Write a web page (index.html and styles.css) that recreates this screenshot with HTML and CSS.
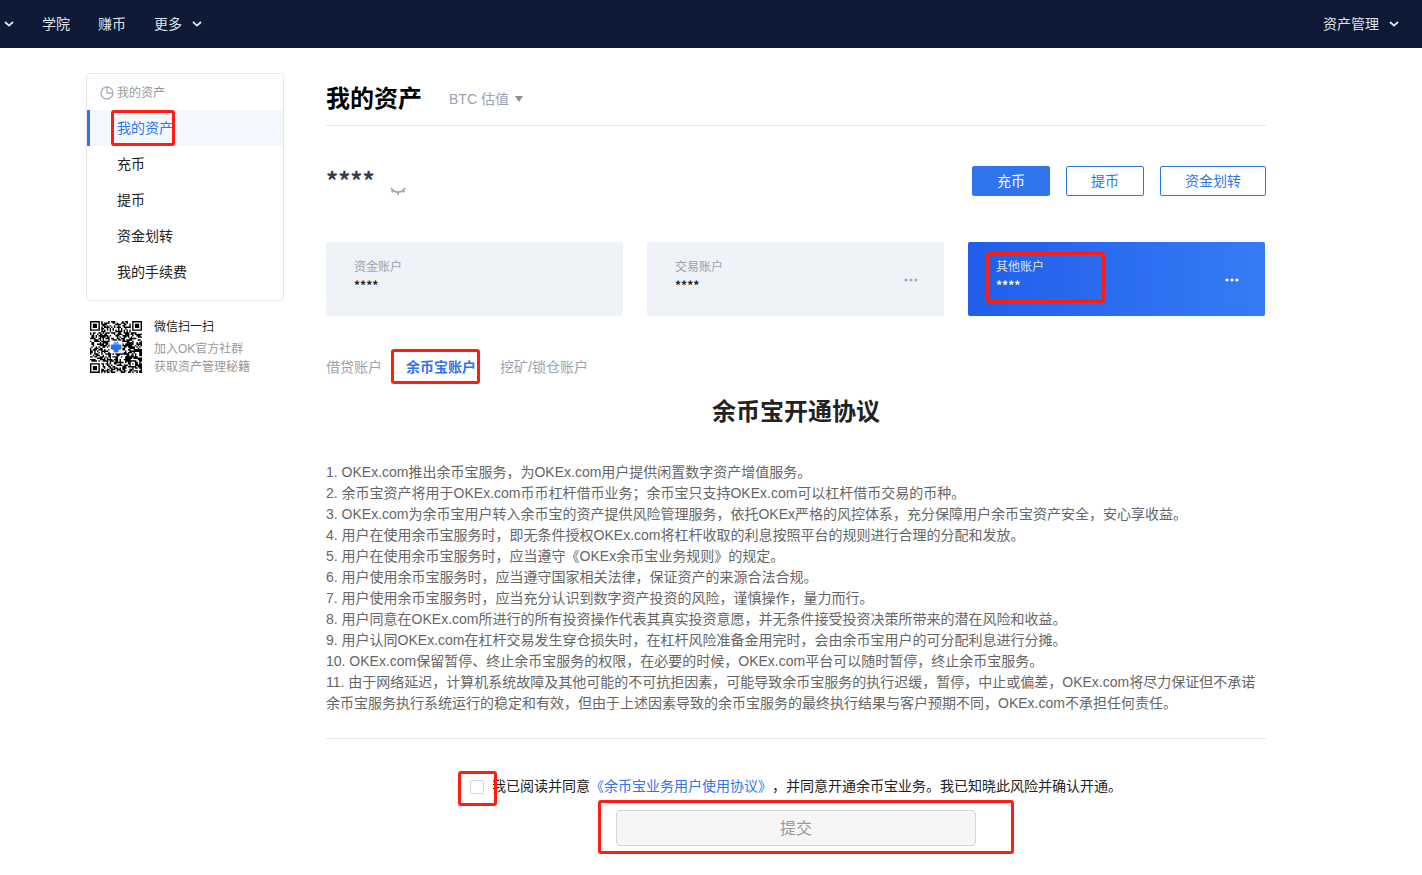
FILE: index.html
```html
<!DOCTYPE html>
<html lang="zh-CN">
<head>
<meta charset="utf-8">
<title>我的资产</title>
<link rel="stylesheet" href="styles.css">
</head>
<body>
<header class="topbar">
  <nav class="topnav">
    <button class="nav-item" type="button" aria-label="展开"><svg class="chevron" viewBox="0 0 10 6"><path d="M1 1l4 3.6L9 1"/></svg></button>
    <a class="nav-item" href="#">学院</a>
    <a class="nav-item" href="#">赚币</a>
    <button class="nav-item" type="button">更多<svg class="chevron" viewBox="0 0 10 6"><path d="M1 1l4 3.6L9 1"/></svg></button>
  </nav>
  <button class="nav-item" type="button">资产管理<svg class="chevron" viewBox="0 0 10 6"><path d="M1 1l4 3.6L9 1"/></svg></button>
</header>
<div class="page">
  <aside class="sidebar">
    <nav class="menu">
      <div class="menu-title"><svg class="pie" viewBox="0 0 14 14"><circle cx="7" cy="7" r="6"/><path d="M7 1v6h6"/></svg>我的资产</div>
      <a class="menu-item active" href="#">我的资产<span class="mark mark-menu"></span></a>
      <a class="menu-item" href="#">充币</a>
      <a class="menu-item" href="#">提币</a>
      <a class="menu-item" href="#">资金划转</a>
      <a class="menu-item" href="#">我的手续费</a>
    </nav>
    <div class="wechat">
      <svg class="qr" viewBox="0 0 37 37" role="img" aria-label="二维码">
        <path id="qr-modules" d=""/>
        <path class="qr-blank" d="M14 14h9v9h-9z"/>
        <rect class="qr-logo-light" x="16.8" y="14.8" width="3.6" height="4" rx="1"/>
        <rect class="qr-logo" x="16.8" y="18.4" width="3.6" height="4" rx="1"/>
        <rect class="qr-logo" x="14.8" y="16.8" width="4" height="3.6" rx="1"/>
        <rect class="qr-logo" x="18.4" y="16.8" width="4" height="3.6" rx="1"/>
      </svg>
      <div class="wechat-text">
        <p class="wechat-title">微信扫一扫</p>
        <p>加入OK官方社群</p>
        <p>获取资产管理秘籍</p>
      </div>
    </div>
  </aside>
  <main class="main">
    <div class="heading">
      <h1>我的资产</h1>
      <button class="currency" type="button">BTC 估值<svg class="caret" viewBox="0 0 8 6"><path d="M0 0h8L4 6z"/></svg></button>
    </div>
    <div class="summary">
      <div class="balance">
        <span class="stars">****</span>
        <button class="eye" type="button" aria-label="显示资产"><svg viewBox="0 0 16 9"><path d="M1 1c3 5.4 11 5.4 14 0M3.6 3.3L1.6 5.2M12.4 3.3l2 1.9M8 5.2V8"/></svg></button>
      </div>
      <div class="actions">
        <button class="btn primary" type="button">充币</button>
        <button class="btn" type="button">提币</button>
        <button class="btn" type="button">资金划转</button>
      </div>
    </div>
    <div class="accounts">
      <section class="account">
        <div><p class="account-name">资金账户</p><p class="account-value">****</p></div>
      </section>
      <section class="account">
        <div><p class="account-name">交易账户</p><p class="account-value">****</p></div>
        <button class="more" type="button" aria-label="更多账户"><svg viewBox="0 0 14 4"><circle cx="2" cy="2" r="1.6"/><circle cx="7" cy="2" r="1.6"/><circle cx="12" cy="2" r="1.6"/></svg></button>
      </section>
      <section class="account selected">
        <div><p class="account-name">其他账户</p><p class="account-value">****</p></div>
        <button class="more" type="button" aria-label="更多账户"><svg viewBox="0 0 14 4"><circle cx="2" cy="2" r="1.6"/><circle cx="7" cy="2" r="1.6"/><circle cx="12" cy="2" r="1.6"/></svg></button>
        <span class="mark mark-account"></span>
      </section>
    </div>
    <nav class="tabs">
      <a class="tab" href="#">借贷账户</a>
      <a class="tab current" href="#">余币宝账户<span class="mark mark-tab"></span></a>
      <a class="tab" href="#">挖矿/锁仓账户</a>
    </nav>
    <article class="agreement">
      <h2>余币宝开通协议</h2>
      <div class="terms">
        <p>1. OKEx.com推出余币宝服务，为OKEx.com用户提供闲置数字资产增值服务。</p>
        <p>2. 余币宝资产将用于OKEx.com币币杠杆借币业务；余币宝只支持OKEx.com可以杠杆借币交易的币种。</p>
        <p>3. OKEx.com为余币宝用户转入余币宝的资产提供风险管理服务，依托OKEx严格的风控体系，充分保障用户余币宝资产安全，安心享收益。</p>
        <p>4. 用户在使用余币宝服务时，即无条件授权OKEx.com将杠杆收取的利息按照平台的规则进行合理的分配和发放。</p>
        <p>5. 用户在使用余币宝服务时，应当遵守《OKEx余币宝业务规则》的规定。</p>
        <p>6. 用户使用余币宝服务时，应当遵守国家相关法律，保证资产的来源合法合规。</p>
        <p>7. 用户使用余币宝服务时，应当充分认识到数字资产投资的风险，谨慎操作，量力而行。</p>
        <p>8. 用户同意在OKEx.com所进行的所有投资操作代表其真实投资意愿，并无条件接受投资决策所带来的潜在风险和收益。</p>
        <p>9. 用户认同OKEx.com在杠杆交易发生穿仓损失时，在杠杆风险准备金用完时，会由余币宝用户的可分配利息进行分摊。</p>
        <p>10. OKEx.com保留暂停、终止余币宝服务的权限，在必要的时候，OKEx.com平台可以随时暂停，终止余币宝服务。</p>
        <p>11. 由于网络延迟，计算机系统故障及其他可能的不可抗拒因素，可能导致余币宝服务的执行迟缓，暂停，中止或偏差，OKEx.com将尽力保证但不承诺余币宝服务执行系统运行的稳定和有效，但由于上述因素导致的余币宝服务的最终执行结果与客户预期不同，OKEx.com不承担任何责任。</p>
      </div>
    </article>
    <form class="confirm">
      <div class="consent">
        <input class="check" type="checkbox" id="agree">
        <label for="agree">我已阅读并同意<a href="#">《余币宝业务用户使用协议》</a>，并同意开通余币宝业务。我已知晓此风险并确认开通。</label>
        <span class="mark mark-check"></span>
      </div>
      <div class="submit-row">
        <button class="submit" type="submit" disabled>提交</button>
        <span class="mark mark-submit"></span>
      </div>
    </form>
  </main>
</div>
<script src="qr.js"></script>
</body>
</html>
```
FILE: styles.css
```css
* { box-sizing: border-box; }
body {
  margin: 0;
  background: #fff;
  color: #222;
  font: 14px/21px "Liberation Sans", "Noto Sans CJK SC", sans-serif;
  text-spacing-trim: space-all;
}
h1, h2, p { margin: 0; }
a { color: inherit; text-decoration: none; }
button { margin: 0; padding: 0; border: 0; background: none; color: inherit; font: inherit; cursor: pointer; }
svg { display: block; flex: none; }

.topbar {
  display: flex;
  justify-content: space-between;
  align-items: center;
  height: 48px;
  padding: 0 23px 0 4px;
  background: #0d1935;
  color: #dfe2e8;
}
.topnav { display: flex; align-items: center; gap: 28px; }
.nav-item { display: flex; align-items: center; gap: 10px; }
.chevron { width: 10px; height: 6px; fill: none; stroke: #e4e6eb; stroke-width: 1.8; }

.page { display: flex; align-items: flex-start; gap: 42px; padding: 25px 156px 20px 86px; }
.sidebar { flex: none; width: 198px; }
.menu { border: 1px solid #e6e6e6; border-radius: 4px; padding-bottom: 10px; }
.menu-title { display: flex; align-items: center; gap: 3px; height: 36px; padding: 2px 0 0 13px; color: #999; font-size: 12px; }
.pie { width: 14px; height: 14px; fill: none; stroke: #a9afbf; stroke-width: 1.3; }
.menu-item { position: relative; display: block; padding-left: 30px; line-height: 36px; }
.menu-item.active { padding-left: 27px; border-left: 3px solid #2f74ee; background: #f3f8ff; color: #3075ee; }
.wechat { display: flex; gap: 12px; padding: 17px 4px; }
.qr { width: 52px; height: 52px; margin-top: 3px; fill: #000; }
.qr .qr-blank { fill: #fff; }
.qr .qr-logo { fill: #2c6ff0; }
.qr .qr-logo-light { fill: #6aa9fa; }
.wechat-text { color: #999; font-size: 12px; line-height: 18px; }
.wechat-title { margin-bottom: 4px; color: #222; }

.main { flex: 1; min-width: 0; }
.heading { display: flex; align-items: center; gap: 27px; height: 53px; border-bottom: 1px solid #e8e8e8; }
h1 { color: #000; font-size: 24px; line-height: 36px; }
.currency { display: flex; align-items: center; gap: 6px; color: #9aa2b4; }
.caret { width: 8px; height: 6px; fill: #8d8f94; }
.summary { display: flex; justify-content: space-between; align-items: center; margin-top: 40px; }
.balance { display: flex; align-items: flex-end; gap: 15px; height: 30px; color: #343c50; }
.stars { font-family: "Noto Sans CJK SC", sans-serif; font-size: 24px; font-weight: bold; line-height: 32px; }
.eye svg { width: 16px; height: 9px; fill: none; stroke: #9aa2b4; stroke-width: 1.6; }
.actions { display: flex; gap: 16px; }
.btn { height: 30px; padding: 0 24px; border: 1px solid #3075ee; border-radius: 2px; color: #3075ee; line-height: 28px; }
.btn.primary { background: #3075ee; color: #fff; }

.accounts { display: grid; grid-template-columns: repeat(3, 1fr); gap: 24px; margin-top: 46px; padding-right: 1px; }
.account {
  position: relative;
  display: flex;
  justify-content: space-between;
  align-items: center;
  height: 74px;
  padding: 2px 26px 0 28px;
  border-radius: 2px;
  background: #eff2f6;
}
.account-name { color: #9aa2b4; font-size: 12px; line-height: 18px; }
.account-value { margin-bottom: 8px; color: #222; font-family: "Noto Sans CJK SC", sans-serif; font-size: 12px; font-weight: bold; line-height: 18px; }
.more svg { width: 14px; height: 4px; fill: #a4abba; }
.account.selected { background: linear-gradient(90deg, #205eea, #367bf5); }
.selected .account-name { color: #d7e4ff; }
.selected .account-value { color: #fff; }
.selected .more svg { fill: #fff; }

.tabs { display: flex; gap: 24px; margin-top: 41px; color: #9aa2b4; }
.tab { position: relative; }
.tab.current { color: #2f74ee; font-weight: bold; }
.agreement { padding: 16px 0 24px; border-bottom: 1px solid #e8e8e8; }
h2 { margin-bottom: 32px; font-size: 24px; line-height: 36px; text-align: center; }
.terms { color: #666; }

.confirm { display: flex; flex-direction: column; align-items: center; gap: 13px; padding-top: 37px; }
.consent { position: relative; display: flex; align-items: center; gap: 8px; }
.consent a { color: #3075ee; }
.check { appearance: none; width: 14px; height: 14px; margin: 0; border: 1px solid #d5d5d5; border-radius: 2px; background: #fff; }
.submit-row { position: relative; }
.submit { width: 360px; height: 36px; border: 1px solid #d5d5d5; border-radius: 4px; background: #f6f6f6; color: #999; font-size: 16px; }

.mark { position: absolute; border: 3px solid #ff1d12; border-radius: 3px; pointer-events: none; }
.mark-menu { top: 0; left: 21px; width: 64px; height: 36px; }
.mark-account { top: 10px; left: 18px; width: 119px; height: 51px; }
.mark-tab { top: -8px; left: -15px; width: 89px; height: 35px; }
.mark-check { top: -5px; left: -12px; width: 39px; height: 35px; }
.mark-submit { top: -10px; left: -18px; width: 416px; height: 54px; }
```
FILE: qr.js
```js
(function () {
  var size = 37, seed = 4711, d = "";
  function random() {
    seed = (seed * 16807) % 2147483647;
    return seed / 2147483647;
  }
  function dark(x, y) {
    var corners = [[0, 0], [size - 7, 0], [0, size - 7]];
    for (var i = 0; i < 3; i++) {
      var m = Math.max(Math.abs(x - corners[i][0] - 3), Math.abs(y - corners[i][1] - 3));
      if (m <= 4) return m === 3 || m < 2;
    }
    var a = Math.max(Math.abs(x - 30), Math.abs(y - 30));
    if (a <= 2) return a !== 1;
    if (x === 6) return y % 2 === 0;
    if (y === 6) return x % 2 === 0;
    return random() < 0.55;
  }
  for (var y = 0; y < size; y++)
    for (var x = 0; x < size; x++)
      if (dark(x, y)) d += "M" + x + " " + y + "h1v1h-1z";
  document.getElementById("qr-modules").setAttribute("d", d);
})();
```
